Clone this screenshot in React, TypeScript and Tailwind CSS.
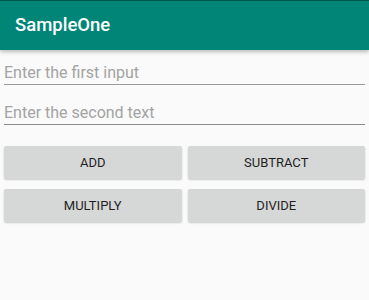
export default function App() {
  const buttons = ["ADD", "SUBTRACT", "MULTIPLY", "DIVIDE"];
  return (
    <div className="h-[300px] w-[369px] overflow-hidden bg-[#fafafa]" style={{ fontFamily: "Roboto, 'Noto Sans', sans-serif" }}>
      <div className="relative z-10 h-[50px] border-t border-[#00574b] bg-[#008577] shadow-[0_2px_4px_rgba(0,0,0,0.25)] flex items-center pl-[15px]">
        <span className="text-[18.5px] font-medium text-white leading-none">SampleOne</span>
      </div>
      <div className="px-[4px]">
        <div className="mt-[12px] h-[23px] border-b border-[#9a9a9a] flex items-center">
          <span className="text-[16px] text-[#a3a3a3] leading-none">Enter the first input</span>
        </div>
        <div className="mt-[17px] h-[23px] border-b border-[#8a8a8a] flex items-center">
          <span className="text-[16px] text-[#a3a3a3] leading-none">Enter the second text</span>
        </div>
        <div className="mt-[21px] grid grid-cols-2 gap-x-[6px] gap-y-[10px]">
          {buttons.map((b) => (
            <button
              key={b}
              className="h-[33px] rounded-[2px] bg-[#d6d7d7] shadow-[0_1px_2px_rgba(0,0,0,0.2)] text-[13px] font-normal text-[#1f1f1f]"
            >
              {b}
            </button>
          ))}
        </div>
      </div>
    </div>
  );
}
